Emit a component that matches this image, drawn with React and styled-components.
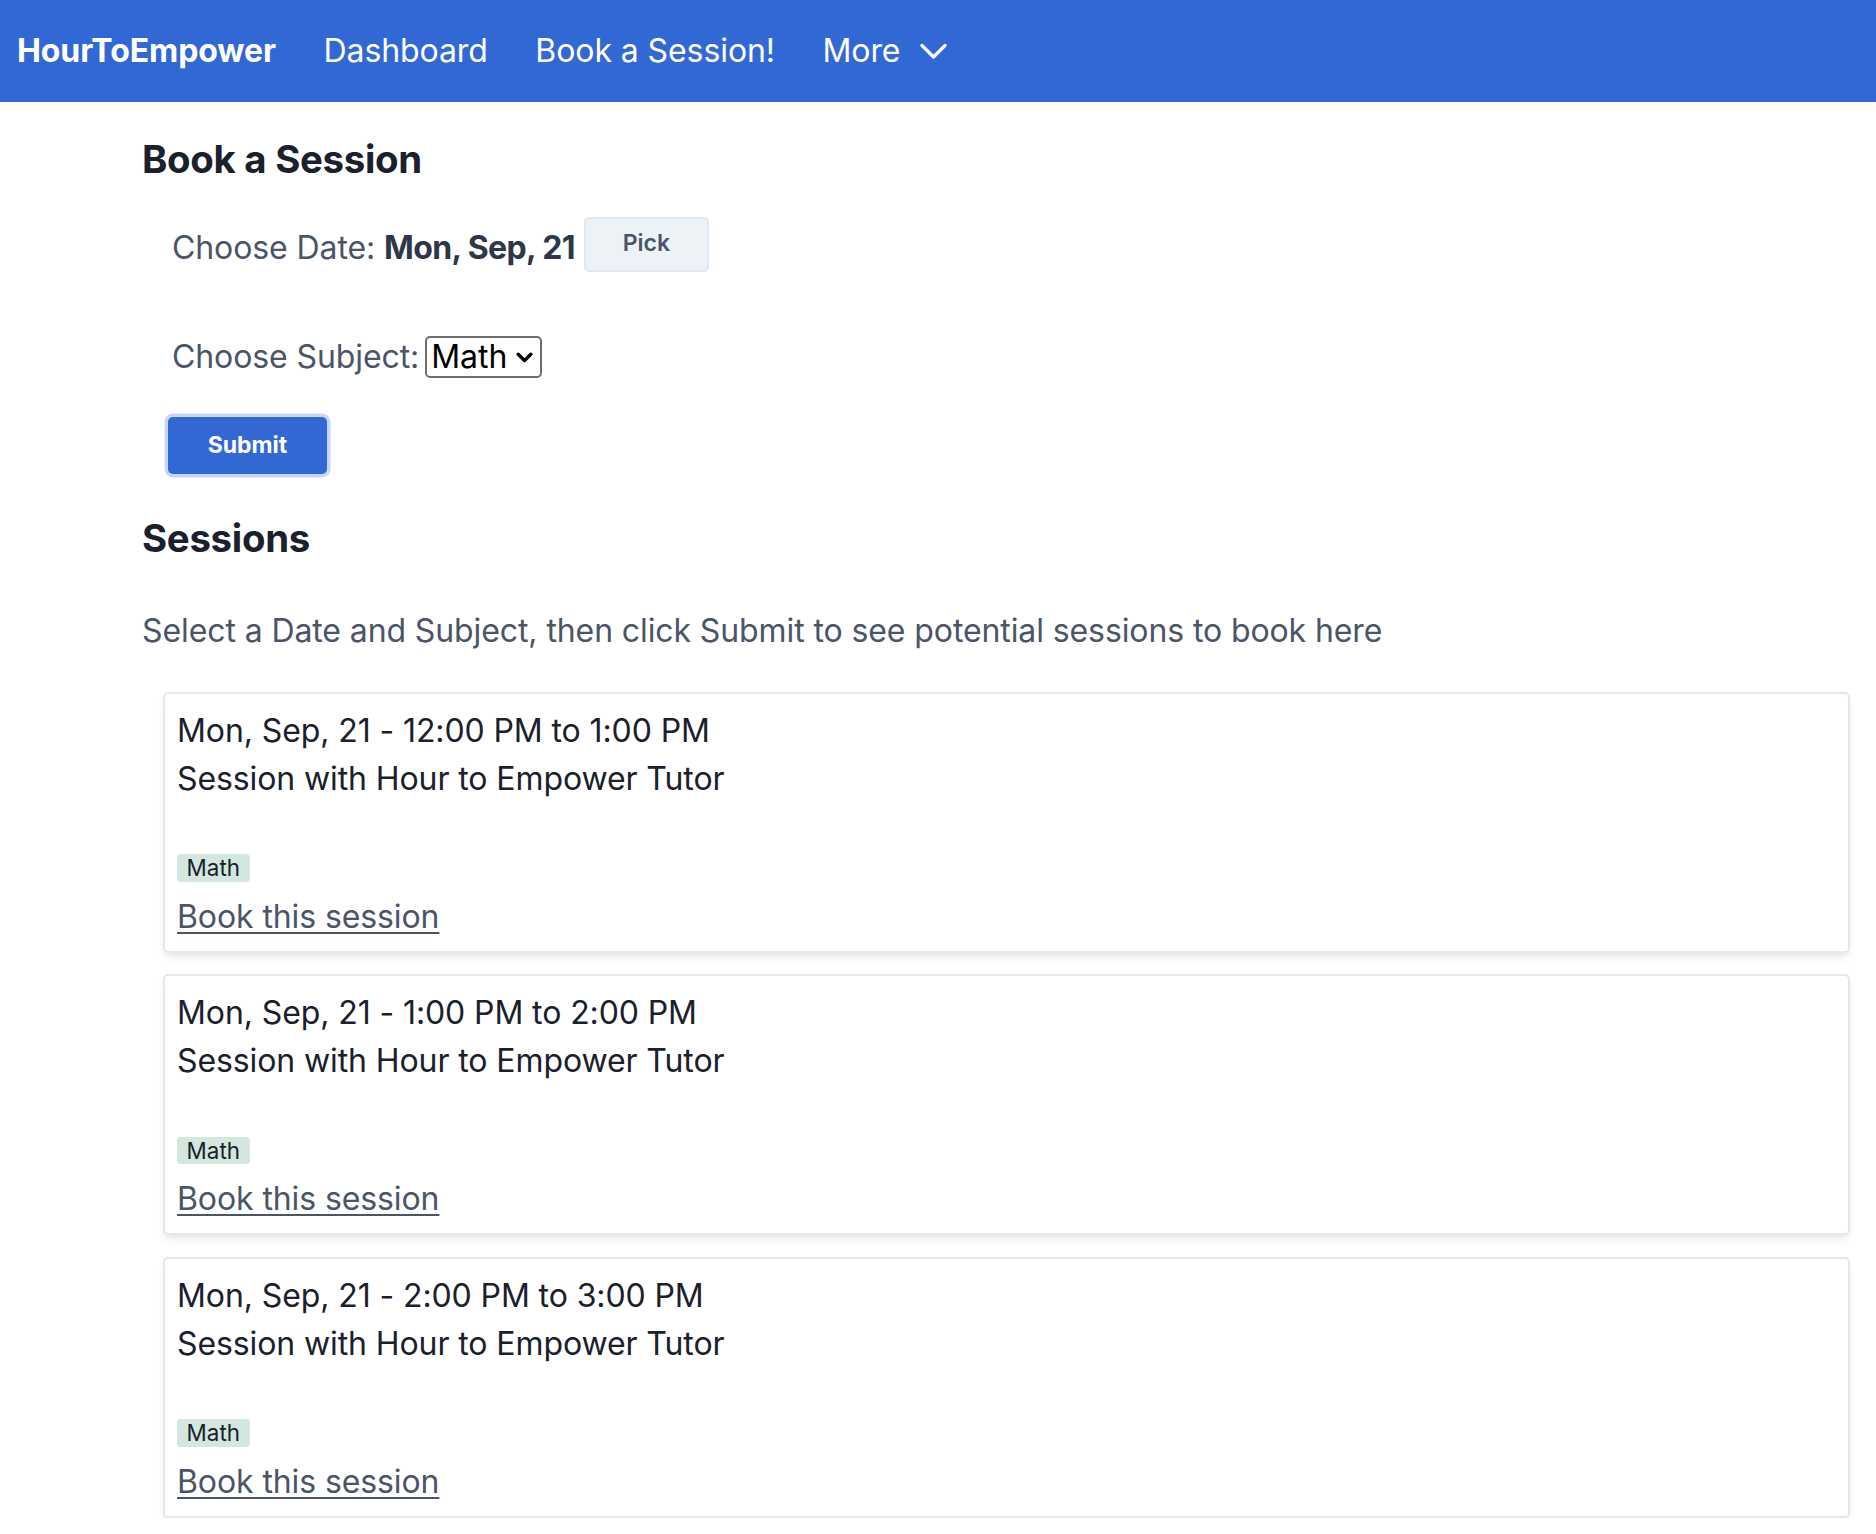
import React from "react";
import styled, { createGlobalStyle } from "styled-components";

const GlobalStyle = createGlobalStyle`
  * { box-sizing: border-box; }
  html, body { margin: 0; padding: 0; overflow: hidden; }
  body {
    font-family: Inter, "Noto Sans", "Liberation Sans", sans-serif;
    background: #ffffff;
    color: #1a202c;
    letter-spacing: -0.1px;
  }
`;

const Nav = styled.nav`
  height: 102px;
  background: #3268d3;
  display: flex;
  align-items: center;
  gap: 47.5px;
  padding-left: 17px;
  color: #ffffff;
  font-size: 32px;
  line-height: 48px;
  letter-spacing: -0.08px;
`;

const Brand = styled.span`
  font-weight: 700;
`;

const NavLink = styled.span`
  font-weight: 400;
`;

const MenuButton = styled.span`
  display: inline-flex;
  align-items: center;
  gap: 20px;
`;

const Main = styled.main`
  padding: 0 26px 0 142px;
`;

const Heading = styled.h2`
  margin: ${(p) => p.$mt}px 0 0;
  font-size: 38.4px;
  line-height: 46px;
  font-weight: 700;
  letter-spacing: -0.3px;
  color: #1a202c;
`;

const Form = styled.form`
  padding-left: 26px;
  display: flex;
  flex-direction: column;
  align-items: flex-start;
`;

const FieldRow = styled.div`
  display: flex;
  align-items: ${(p) => p.$align};
  margin-top: ${(p) => p.$mt}px;
  padding-left: 4px;
  font-size: 32px;
  line-height: 48px;
  color: #4a5568;
`;

const Strong = styled.strong`
  font-weight: 700;
  letter-spacing: -0.6px;
  color: #2d3748;
`;

const PickButton = styled.button`
  margin-left: 9px;
  width: 125px;
  height: 55px;
  background: #edf2f7;
  border: 2px solid #e2e8f0;
  border-radius: 5px;
  font-family: inherit;
  font-size: 23px;
  font-weight: 600;
  color: #4a5568;
  padding: 0 0 2px;
`;

const SelectWrap = styled.span`
  position: relative;
  display: inline-flex;
  margin-left: 6px;
`;

const Select = styled.select`
  appearance: none;
  -webkit-appearance: none;
  width: 117px;
  height: 42px;
  border: 2px solid #6e6e6e;
  border-radius: 5px;
  background: #ffffff;
  color: #000000;
  font-family: inherit;
  font-size: 32px;
  line-height: 38px;
  padding: 0 30px 0 4px;
`;

const SelectArrow = styled.svg`
  position: absolute;
  right: 9px;
  top: 16px;
  pointer-events: none;
`;

const SubmitButton = styled.button`
  margin-top: 36px;
  width: 159px;
  height: 57px;
  background: #3268d3;
  border: none;
  border-radius: 5px;
  box-shadow: 0 0 0 3.5px #c6d6f4;
  color: #ffffff;
  font-family: inherit;
  font-size: 23px;
  font-weight: 700;
`;

const Hint = styled.p`
  margin: 46px 0 0;
  font-size: 32px;
  line-height: 48px;
  color: #4a5568;
`;

const CardList = styled.div`
  margin-top: 37px;
  padding-left: 21px;
  display: flex;
  flex-direction: column;
  gap: 21.5px;
`;

const Card = styled.article`
  border: 2px solid #e2e8f0;
  border-radius: 5px;
  background: #ffffff;
  padding: 13px 12px 10px;
  box-shadow: 0 6px 10px -2px rgba(0, 0, 0, 0.08), 0 3px 6px -2px rgba(0, 0, 0, 0.05);
  display: flex;
  flex-direction: column;
  align-items: flex-start;
  font-size: 32px;
  line-height: 48px;
  color: #1a202c;
`;

const CardLine = styled.div``;

const Tag = styled.span`
  margin-top: 51.5px;
  display: inline-flex;
  align-items: center;
  height: 27.5px;
  padding: 0 9.6px;
  border-radius: 3.5px;
  background: #d3e7df;
  color: #1a202c;
  font-size: 22.4px;
  line-height: 27.5px;
  letter-spacing: 0;
`;

const BookLink = styled.a`
  margin-top: 11px;
  color: #4a5568;
  text-decoration: underline;
  text-underline-offset: 4px;
  text-decoration-thickness: 2px;
`;

const sessions = [
  "Mon, Sep, 21 - 12:00 PM to 1:00 PM",
  "Mon, Sep, 21 - 1:00 PM to 2:00 PM",
  "Mon, Sep, 21 - 2:00 PM to 3:00 PM",
];

export default function App() {
  return (
    <>
      <GlobalStyle />
      <Nav>
        <Brand>HourToEmpower</Brand>
        <NavLink>Dashboard</NavLink>
        <NavLink>Book a Session!</NavLink>
        <MenuButton>
          More
          <svg width="27" height="17" viewBox="0 0 27 17" fill="none">
            <polyline
              points="2,2.5 13.5,14 25,2.5"
              stroke="#ffffff"
              strokeWidth="3.2"
              strokeLinecap="round"
              strokeLinejoin="round"
            />
          </svg>
        </MenuButton>
      </Nav>
      <Main>
        <Heading $mt={33.5}>Book a Session</Heading>
        <Form onSubmit={(e) => e.preventDefault()}>
          <FieldRow $mt={35} $align="flex-end">
            <span>
              Choose Date: <Strong>Mon, Sep, 21</Strong>
            </span>
            <PickButton type="button">Pick</PickButton>
          </FieldRow>
          <FieldRow $mt={61} $align="center">
            <span>Choose Subject:</span>
            <SelectWrap>
              <Select defaultValue="Math">
                <option>Math</option>
                <option>English</option>
                <option>Science</option>
              </Select>
              <SelectArrow width="17" height="11" viewBox="0 0 17 11" fill="none">
                <polyline
                  points="2.2,2.2 8.5,8.5 14.8,2.2"
                  stroke="#000000"
                  strokeWidth="3.4"
                  strokeLinecap="round"
                  strokeLinejoin="round"
                />
              </SelectArrow>
            </SelectWrap>
          </FieldRow>
          <SubmitButton type="submit">Submit</SubmitButton>
        </Form>
        <Heading $mt={41}>Sessions</Heading>
        <Hint>Select a Date and Subject, then click Submit to see potential sessions to book here</Hint>
        <CardList>
          {sessions.map((s) => (
            <Card key={s}>
              <CardLine>{s}</CardLine>
              <CardLine>Session with Hour to Empower Tutor</CardLine>
              <Tag>Math</Tag>
              <BookLink href="#">Book this session</BookLink>
            </Card>
          ))}
        </CardList>
      </Main>
    </>
  );
}
